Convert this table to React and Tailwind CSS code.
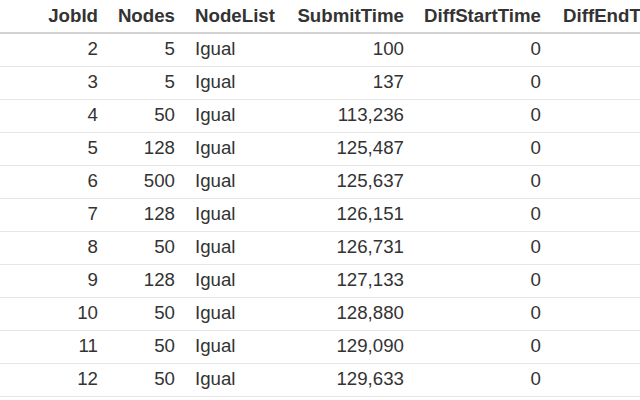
const rows = [
  [2, 5, "Igual", "100", "0"],
  [3, 5, "Igual", "137", "0"],
  [4, 50, "Igual", "113,236", "0"],
  [5, 128, "Igual", "125,487", "0"],
  [6, 500, "Igual", "125,637", "0"],
  [7, 128, "Igual", "126,151", "0"],
  [8, 50, "Igual", "126,731", "0"],
  [9, 128, "Igual", "127,133", "0"],
  [10, 50, "Igual", "128,880", "0"],
  [11, 50, "Igual", "129,090", "0"],
  [12, 50, "Igual", "129,633", "0"],
];

export default function App() {
  return (
    <div
      className="h-[400px] w-[640px] overflow-hidden bg-white text-[#333333]"
      style={{ fontFamily: '"Liberation Sans", Arial, sans-serif' }}
    >
      <table className="w-[760px] table-fixed border-collapse text-[18.7px] leading-none">
        <colgroup>
          <col className="w-[108px]" />
          <col className="w-[77px]" />
          <col className="w-[99px]" />
          <col className="w-[130px]" />
          <col className="w-[137px]" />
          <col className="w-[209px]" />
        </colgroup>
        <thead>
          <tr className="h-[33px] border-b-2 border-[#d3d3d3] font-bold">
            <th className="pr-[10px] text-right">JobId</th>
            <th className="pr-[10px] text-right">Nodes</th>
            <th className="pl-[10px] text-left">NodeList</th>
            <th className="pr-[10px] text-right">SubmitTime</th>
            <th className="pr-[10px] text-right">DiffStartTime</th>
            <th className="whitespace-nowrap pl-[12px] text-left">DiffEndTime</th>
          </tr>
        </thead>
        <tbody>
          {rows.map((r) => (
            <tr key={r[0]} className="h-[33px] border-b border-[#e6e6e6]">
              <td className="pr-[10px] text-right">{r[0]}</td>
              <td className="pr-[10px] text-right">{r[1]}</td>
              <td className="pl-[10px] text-left">{r[2]}</td>
              <td className="pr-[10px] text-right">{r[3]}</td>
              <td className="pr-[10px] text-right">{r[4]}</td>
              <td className="pl-[12px] text-right"></td>
            </tr>
          ))}
        </tbody>
      </table>
    </div>
  );
}
